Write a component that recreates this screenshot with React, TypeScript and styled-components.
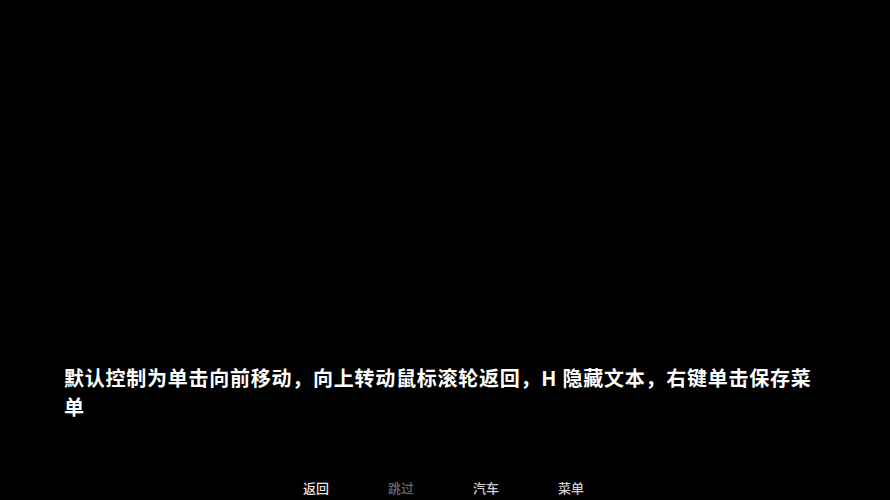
import React from "react";
import styled, { createGlobalStyle } from "styled-components";

const Global = createGlobalStyle`
  html, body { margin: 0; padding: 0; background: #000; }
  body { font-family: "Noto Sans CJK SC", "Noto Sans", sans-serif; }
  * { box-sizing: border-box; }
`;

const Screen = styled.div`
  width: 890px;
  height: 500px;
  background: #000;
  display: flex;
  flex-direction: column;
  justify-content: flex-end;
  overflow: hidden;
`;

const Dialogue = styled.div`
  padding: 0 64px 0 64px;
  color: #fff;
  font-size: 20px;
  font-weight: 700;
  line-height: 29px;
  letter-spacing: 0.75px;
  margin-bottom: 56px;
`;

const QuickMenu = styled.nav`
  display: flex;
  justify-content: center;
  gap: 58px;
  padding-right: 2px;
  margin-bottom: 1px;
`;

const MenuItem = styled.span<{ $disabled?: boolean; $bright?: boolean }>`
  font-size: 13px;
  line-height: 22px;
  width: 27px;
  white-space: nowrap;
  font-weight: 500;
  color: ${(p) => (p.$disabled ? "#6a6a6a" : p.$bright ? "#e6e6e6" : "#cfcfcf")};
`;

export default function App() {
  return (
    <>
      <Global />
      <Screen>
        <Dialogue>
          默认控制为单击向前移动，向上转动鼠标滚轮返回，H 隐藏文本，右键单击保存菜单
        </Dialogue>
        <QuickMenu>
          <MenuItem $bright>返回</MenuItem>
          <MenuItem $disabled>跳过</MenuItem>
          <MenuItem>汽车</MenuItem>
          <MenuItem>菜单</MenuItem>
        </QuickMenu>
      </Screen>
    </>
  );
}
